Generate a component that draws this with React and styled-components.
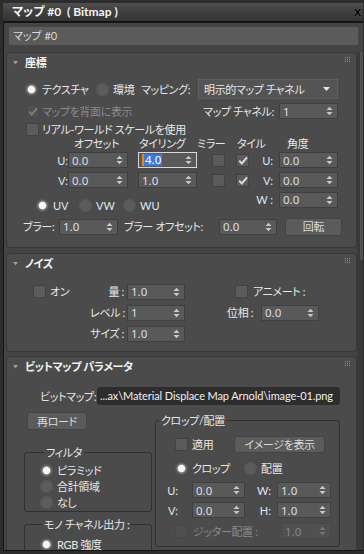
import React from "react";
import styled, { createGlobalStyle, css } from "styled-components";

const FONT = `"Lato", "Noto Sans CJK JP", sans-serif`;

const GlobalStyle = createGlobalStyle`
  html, body { margin: 0; padding: 0; background: #444; }
  * { box-sizing: border-box; }
`;

const Window = styled.div`
  width: 364px;
  height: 554px;
  background: #444;
  border-style: solid;
  border-color: #2c2c2c;
  border-width: 3px 1px 3px 3px;
  display: flex;
  flex-direction: column;
  overflow: hidden;
  font-family: ${FONT};
  font-size: 11px;
  letter-spacing: -0.35px;
  font-feature-settings: "palt";
  color: #e8e8e8;
`;

const TitleBar = styled.div`
  height: 20px;
  flex-shrink: 0;
  display: flex;
  align-items: center;
  padding: 0 1px 0 9px;
  background: linear-gradient(180deg, #4e4e4e 0%, #3e3e3e 55%, #343434 100%);
  border-bottom: 2px solid #141414;
`;

const TitleText = styled.span`
  font-weight: 700;
  font-size: 12px;
  letter-spacing: 0;
  color: #f4f4f4;
  white-space: pre;
  line-height: 16px;
`;

const Close = styled.span`
  margin-left: auto;
  font-family: "Liberation Sans", sans-serif;
  font-weight: 700;
  font-size: 13px;
  line-height: 14px;
  color: #050505;
  text-shadow: 0 0 1px rgba(200, 200, 200, 0.5);
  padding-right: 1px;
`;

const Frame = styled.div`
  flex: 1;
  min-height: 0;
  display: flex;
  flex-direction: column;
  border-left: 1px solid #161616;
`;

const NameRow = styled.div`
  flex-shrink: 0;
  padding: 4px 5px 7px 5px;
`;

const NameField = styled.div`
  height: 18px;
  background: #5b5b5b;
  color: #dadada;
  font-size: 11px;
  letter-spacing: 0;
  line-height: 18px;
  padding-left: 4px;
`;

const Body = styled.div`
  flex: 1;
  min-height: 0;
  display: flex;
  border-bottom: 1px solid #161616;
`;

const PanelStack = styled.div`
  margin-left: 2px;
  width: 351px;
  flex-shrink: 0;
  display: flex;
  flex-direction: column;
  overflow: hidden;
`;

const ScrollTrack = styled.div`
  width: 6px;
  flex-shrink: 0;
  background: #393939;
  padding-left: 3px;
`;

const ScrollThumb = styled.div`
  width: 3px;
  height: 208px;
  background: #525252;
`;

const Panel = styled.section`
  flex-shrink: 0;
  height: ${(p) => p.$h}px;
  margin-top: ${(p) => p.$mt || 0}px;
  background: #4b4b4b;
  border: 1px solid #373737;
  border-radius: 4px;
  overflow: hidden;
  display: flex;
  flex-direction: column;
`;

const HeaderBar = styled.div`
  height: 19px;
  flex-shrink: 0;
  display: flex;
  align-items: center;
  padding-left: 6px;
`;

const HeaderTitle = styled.span`
  margin-left: 7px;
  font-weight: 700;
  color: #f2f2f2;
  line-height: 13px;
  white-space: nowrap;
`;

const GripSvg = styled.svg`
  margin-left: auto;
  margin-right: 6px;
  align-self: flex-start;
  margin-top: 4px;
`;

const PanelHeader = ({ title }) => (
  <HeaderBar>
    <svg width="5" height="4" viewBox="0 0 5 4">
      <polygon points="0,0 5,0 2.5,3.5" fill="#9a9a9a" />
    </svg>
    <HeaderTitle>{title}</HeaderTitle>
    <GripSvg width="5" height="5" viewBox="0 0 5 5">
      {[0, 2, 4].map((y) =>
        [0, 2, 4].map((x) => <rect key={`${x}-${y}`} x={x} y={y} width="1" height="1" fill="#8a8a8a" />)
      )}
    </GripSvg>
  </HeaderBar>
);

const Row = styled.div`
  display: flex;
  align-items: center;
  flex-shrink: 0;
  height: ${(p) => p.$h || 20}px;
  margin-top: ${(p) => p.$mt || 0}px;
  padding-left: ${(p) => p.$pl || 0}px;
  padding-right: ${(p) => p.$pr || 0}px;
`;

const Item = styled.div`
  display: flex;
  align-items: center;
  flex-shrink: 0;
  ${(p) => p.$w && css`width: ${p.$w}px;`}
  ${(p) => p.$pl && css`padding-left: ${p.$pl}px;`}
  ${(p) => p.$span && css`grid-column: 1 / -1;`}
`;

const Text = styled.span`
  display: inline-block;
  white-space: nowrap;
  line-height: 13px;
  color: ${(p) => (p.$dim ? "#8a8a8a" : p.$axis ? "#dfe7f2" : "#e8e8e8")};
  ${(p) => p.$w != null && css`width: ${p.$w}px; flex-shrink: 0;`}
  ${(p) => p.$ml != null && css`margin-left: ${p.$ml}px;`}
  ${(p) => p.$right && css`text-align: right;`}
  ${(p) => p.$auto && css`margin-left: auto;`}
  ${(p) => p.$axis && css`letter-spacing: 0;`}
`;

const Radio = styled.span`
  width: 13px;
  height: 13px;
  border-radius: 50%;
  flex-shrink: 0;
  background: ${(p) =>
    p.$on
      ? "radial-gradient(circle at 50% 50%, #f6f6f6 0 3.3px, #777 4.3px, #5e5e5e 6.5px)"
      : "#5c5c5c"};
  box-shadow: inset 0 0 0 1px #555;
  margin-right: ${(p) => (p.$gap != null ? p.$gap : 4)}px;
`;

const CheckBox = styled.span`
  width: 13px;
  height: 13px;
  flex-shrink: 0;
  background: ${(p) => (p.$disabled ? "#505050" : "#5b5b5b")};
  border: 1px solid ${(p) => (p.$disabled ? "#484848" : "#424242")};
  display: flex;
  align-items: center;
  justify-content: center;
  margin-right: ${(p) => (p.$gap != null ? p.$gap : 3)}px;
`;

const Check = ({ on, disabled, gap }) => (
  <CheckBox $disabled={disabled} $gap={gap}>
    {on && (
      <svg width="10" height="9" viewBox="0 0 10 9">
        <path d="M1.2 4.6 L3.8 7.4 L9 1.4" fill="none" stroke={disabled ? "#7c7c7c" : "#dcdcdc"} strokeWidth="2" />
      </svg>
    )}
  </CheckBox>
);

const SpinBox = styled.div`
  width: ${(p) => p.$w}px;
  height: ${(p) => p.$h || 16}px;
  flex-shrink: 0;
  display: flex;
  align-items: center;
  background: ${(p) => (p.$disabled ? "#505050" : "#595959")};
  border: 1px solid ${(p) => (p.$sel ? "#d8d8d8" : p.$disabled ? "#484848" : "#3f3f3f")};
  ${(p) => p.$ml != null && css`margin-left: ${p.$ml}px;`}
  ${(p) => p.$auto && css`margin-left: auto;`}
`;

const SpinValue = styled.span`
  flex: 1;
  display: flex;
  align-items: center;
  padding-left: 3px;
  font-family: "Noto Sans", sans-serif;
  font-size: 11.5px;
  letter-spacing: 0;
  line-height: 13px;
  color: ${(p) => (p.$disabled ? "#858585" : "#d9dfe8")};
`;

const Caret = styled.span`
  width: 2px;
  height: 12px;
  background: #e88a1a;
`;

const Selected = styled.span`
  background: #3b7ad9;
  color: #fff;
  padding: 0 1px;
  line-height: 12px;
`;

const ArrowSvg = styled.svg`
  margin-right: 4px;
  flex-shrink: 0;
`;

const Spinner = ({ w, value, sel, disabled, ml, auto, h }) => (
  <SpinBox $w={w} $h={h} $sel={sel} $disabled={disabled} $ml={ml} $auto={auto}>
    <SpinValue $disabled={disabled}>
      {sel ? (
        <>
          <Caret />
          <Selected>{value}</Selected>
        </>
      ) : (
        value
      )}
    </SpinValue>
    <ArrowSvg width="7" height="10" viewBox="0 0 7 10">
      <path d="M0.5 4 L3.5 0.8 L6.5 4 Z M0.5 6 L3.5 9.2 L6.5 6 Z" fill={disabled ? "#777" : "#c9c9c9"} />
    </ArrowSvg>
  </SpinBox>
);

const Dropdown = styled.div`
  margin-left: auto;
  width: 140px;
  height: 20px;
  flex-shrink: 0;
  background: #545454;
  border: 1px solid #5e5e5e;
  display: flex;
  align-items: center;
  justify-content: space-between;
  padding: 0 7px 0 5px;
  color: #e8e8e8;
  line-height: 13px;
`;

const Button = styled.div`
  width: ${(p) => p.$w}px;
  height: ${(p) => p.$h || 18}px;
  flex-shrink: 0;
  display: flex;
  align-items: center;
  justify-content: center;
  background: #5b5b5b;
  border: 1px solid #444;
  border-radius: 3px;
  color: #dcdcdc;
  line-height: 13px;
  white-space: nowrap;
  ${(p) => p.$ml != null && css`margin-left: ${p.$ml}px;`}
  ${(p) => p.$mt != null && css`margin-top: ${p.$mt}px;`}
`;

const MidBlock = styled.div`
  display: flex;
  flex-shrink: 0;
  padding-left: 29px;
`;

const LeftBlock = styled.div`
  width: 213px;
  flex-shrink: 0;
  display: flex;
  flex-direction: column;
`;

const UVGrid = styled.div`
  display: grid;
  margin-left: 17px;
  grid-template-columns: 15px 70px 74px 24px 13px;
  grid-template-rows: 13px 20px 20px;
  align-items: center;
  justify-items: start;
`;

const AngleGrid = styled.div`
  display: grid;
  grid-template-columns: 24px 59px;
  column-gap: 6px;
  grid-template-rows: 13px 20px 20px 19px;
  align-items: center;
`;

const NoiseBody = styled.div`
  display: flex;
  padding: 8px 0 0 26px;
`;

const Col = styled.div`
  display: grid;
  grid-template-columns: ${(p) => p.$cols};
  grid-auto-rows: 21px;
  align-items: center;
  column-gap: ${(p) => p.$gap || 0}px;
  margin-left: ${(p) => p.$ml || 0}px;
  flex-shrink: 0;
`;

const PathField = styled.div`
  width: 243px;
  height: 18px;
  flex-shrink: 0;
  background: #2d2d2d;
  border-radius: 3px;
  color: #f0f0f0;
  font-family: "Lato", sans-serif;
  font-size: 11px;
  letter-spacing: -0.1px;
  line-height: 18px;
  padding-left: 3px;
  white-space: nowrap;
  overflow: hidden;
`;

const Columns = styled.div`
  display: flex;
  align-items: flex-start;
  padding-left: 17px;
  flex-shrink: 0;
`;

const Stack = styled.div`
  width: ${(p) => p.$w}px;
  margin-left: ${(p) => p.$ml || 0}px;
  flex-shrink: 0;
  display: flex;
  flex-direction: column;
`;

const Group = styled.fieldset`
  margin: ${(p) => p.$mt || 0}px 0 0 0;
  padding: ${(p) => p.$pt || 0}px 0 ${(p) => p.$pb || 0}px ${(p) => p.$pl || 0}px;
  border: 1px solid #303030;
  border-radius: 3px;
  min-width: 0;
  ${(p) => p.$h && css`height: ${p.$h}px;`}
`;

const Legend = styled.legend`
  padding: 0 2px;
  margin-left: ${(p) => (p.$ml != null ? p.$ml : 4)}px;
  line-height: 13px;
  color: #e8e8e8;
  white-space: nowrap;
`;

const PATH = "...ax\\Material Displace Map Arnold\\image-01.png";

export default function App() {
  return (
    <>
      <GlobalStyle />
      <Window>
        <TitleBar>
          <TitleText>{"マップ #0  ( Bitmap )"}</TitleText>
          <Close>x</Close>
        </TitleBar>
        <Frame>
          <NameRow>
            <NameField>マップ #0</NameField>
          </NameRow>
          <Body>
            <PanelStack>
              <Panel $h={196}>
                <PanelHeader title="座標" />
                <Row $h={20} $mt={7} $pl={18} $pr={18}>
                  <Item $w={71}>
                    <Radio $on />
                    <Text>テクスチャ</Text>
                  </Item>
                  <Item $w={45}>
                    <Radio />
                    <Text>環境</Text>
                  </Item>
                  <Text>マッピング:</Text>
                  <Dropdown>
                    <span>明示的マップ チャネル</span>
                    <svg width="7" height="4" viewBox="0 0 7 4">
                      <polygon points="0,0 7,0 3.5,4" fill="#e6e6e6" />
                    </svg>
                  </Dropdown>
                </Row>
                <Row $h={20} $mt={2} $pl={19} $pr={18}>
                  <Check on disabled />
                  <Text $dim>マップを背面に表示</Text>
                  <Text $auto>マップ チャネル:</Text>
                  <Spinner w={59} value="1" ml={5} />
                </Row>
                <Row $h={16} $pl={19}>
                  <Check />
                  <Text>リアル-ワールド スケールを使用</Text>
                </Row>
                <MidBlock>
                  <LeftBlock>
                    <UVGrid>
                      <span />
                      <Text $ml={6}>オフセット</Text>
                      <Text $ml={1}>タイリング</Text>
                      <Text $ml={-15}>ミラー</Text>
                      <Text $ml={1}>タイル</Text>

                      <Text $axis $right $w={15}>U:</Text>
                      <Spinner w={60} value="0.0" />
                      <Spinner w={59} value="4.0" sel />
                      <Check gap={0} />
                      <Check on gap={0} />

                      <Text $axis $right $w={15}>V:</Text>
                      <Spinner w={60} value="0.0" />
                      <Spinner w={59} value="1.0" />
                      <Check gap={0} />
                      <Check on gap={0} />
                    </UVGrid>
                    <Row $h={16} $mt={7}>
                      <Item $w={43}>
                        <Radio $on />
                        <Text $axis>UV</Text>
                      </Item>
                      <Item $w={44}>
                        <Radio />
                        <Text $axis>VW</Text>
                      </Item>
                      <Item>
                        <Radio />
                        <Text $axis>WU</Text>
                      </Item>
                    </Row>
                  </LeftBlock>
                  <AngleGrid>
                    <span />
                    <Text $ml={8}>角度</Text>
                    <Text $axis $right>U:</Text>
                    <Spinner w={59} value="0.0" />
                    <Text $axis $right>V:</Text>
                    <Spinner w={59} value="0.0" />
                    <Text $axis $right>W :</Text>
                    <Spinner w={59} value="0.0" />
                  </AngleGrid>
                </MidBlock>
                <Row $h={19} $mt={4} $pl={16}>
                  <Text $w={36}>ブラー:</Text>
                  <Spinner w={59} value="1.0" />
                  <Text $w={95} $ml={6}>ブラー オフセット:</Text>
                  <Spinner w={58} value="0.0" />
                  <Button $w={57} $h={18} $ml={8}>回転</Button>
                </Row>
              </Panel>

              <Panel $h={99} $mt={5}>
                <PanelHeader title="ノイズ" />
                <NoiseBody>
                  <Col $cols="57px">
                    <Item>
                      <Check gap={4} />
                      <Text>オン</Text>
                    </Item>
                  </Col>
                  <Col $cols="34px 58px" $gap={3}>
                    <Text $right>量 :</Text>
                    <Spinner w={58} value="1.0" />
                    <Text $right>レベル :</Text>
                    <Spinner w={58} value="1" />
                    <Text $right>サイズ :</Text>
                    <Spinner w={58} value="1.0" />
                  </Col>
                  <Col $cols="27px 58px" $gap={7} $ml={42}>
                    <Item $span $pl={8}>
                      <Check gap={5} />
                      <Text>アニメート :</Text>
                    </Item>
                    <Text>位相 :</Text>
                    <Spinner w={58} value="0.0" />
                  </Col>
                </NoiseBody>
              </Panel>

              <Panel $h={240} $mt={4}>
                <PanelHeader title="ビットマップ パラメータ" />
                <Row $h={18} $mt={11} $pl={33}>
                  <Text $w={57}>ビットマップ:</Text>
                  <PathField>{PATH}</PathField>
                </Row>
                <Columns>
                  <Stack $w={128}>
                    <Button $w={60} $h={18} $ml={3} $mt={7}>再ロード</Button>
                    <Group $mt={16} $pt={3} $pl={15} $h={66}>
                      <Legend>フィルタ</Legend>
                      <Row $h={16}>
                        <Radio $on />
                        <Text>ピラミッド</Text>
                      </Row>
                      <Row $h={16}>
                        <Radio />
                        <Text>合計領域</Text>
                      </Row>
                      <Row $h={16}>
                        <Radio />
                        <Text>なし</Text>
                      </Row>
                    </Group>
                    <Group $mt={6} $pt={5} $pl={15} $h={80}>
                      <Legend $ml={2}>モノ チャネル出力 :</Legend>
                      <Row $h={16}>
                        <Radio $on />
                        <Text>RGB 強度</Text>
                      </Row>
                    </Group>
                  </Stack>
                  <Stack $w={185} $ml={3}>
                    <Group $mt={9} $pt={7} $pb={5}>
                      <Legend $ml={3}>クロップ/配置</Legend>
                      <Row $h={20} $pl={19}>
                        <Item $w={59}>
                          <Check gap={4} />
                          <Text>適用</Text>
                        </Item>
                        <Button $w={91} $h={17}>イメージを表示</Button>
                      </Row>
                      <Row $h={20} $mt={4} $pl={19}>
                        <Item $w={69}>
                          <Radio $on />
                          <Text>クロップ</Text>
                        </Item>
                        <Item>
                          <Radio />
                          <Text>配置</Text>
                        </Item>
                      </Row>
                      <Row $h={20} $mt={2}>
                        <Text $axis $right $w={22}>U:</Text>
                        <Spinner w={53} value="0.0" ml={14} />
                        <Text $axis $right $w={26}>W:</Text>
                        <Spinner w={54} value="1.0" ml={6} />
                      </Row>
                      <Row $h={20}>
                        <Text $axis $right $w={22}>V:</Text>
                        <Spinner w={53} value="0.0" ml={14} />
                        <Text $axis $right $w={26}>H:</Text>
                        <Spinner w={54} value="1.0" ml={6} />
                      </Row>
                      <Row $h={20} $mt={1} $pl={19} $pr={8}>
                        <Check disabled gap={5} />
                        <Text $dim>ジッター配置 :</Text>
                        <Spinner w={50} value="1.0" disabled auto />
                      </Row>
                    </Group>
                  </Stack>
                </Columns>
              </Panel>
            </PanelStack>
            <ScrollTrack>
              <ScrollThumb />
            </ScrollTrack>
          </Body>
        </Frame>
      </Window>
    </>
  );
}
